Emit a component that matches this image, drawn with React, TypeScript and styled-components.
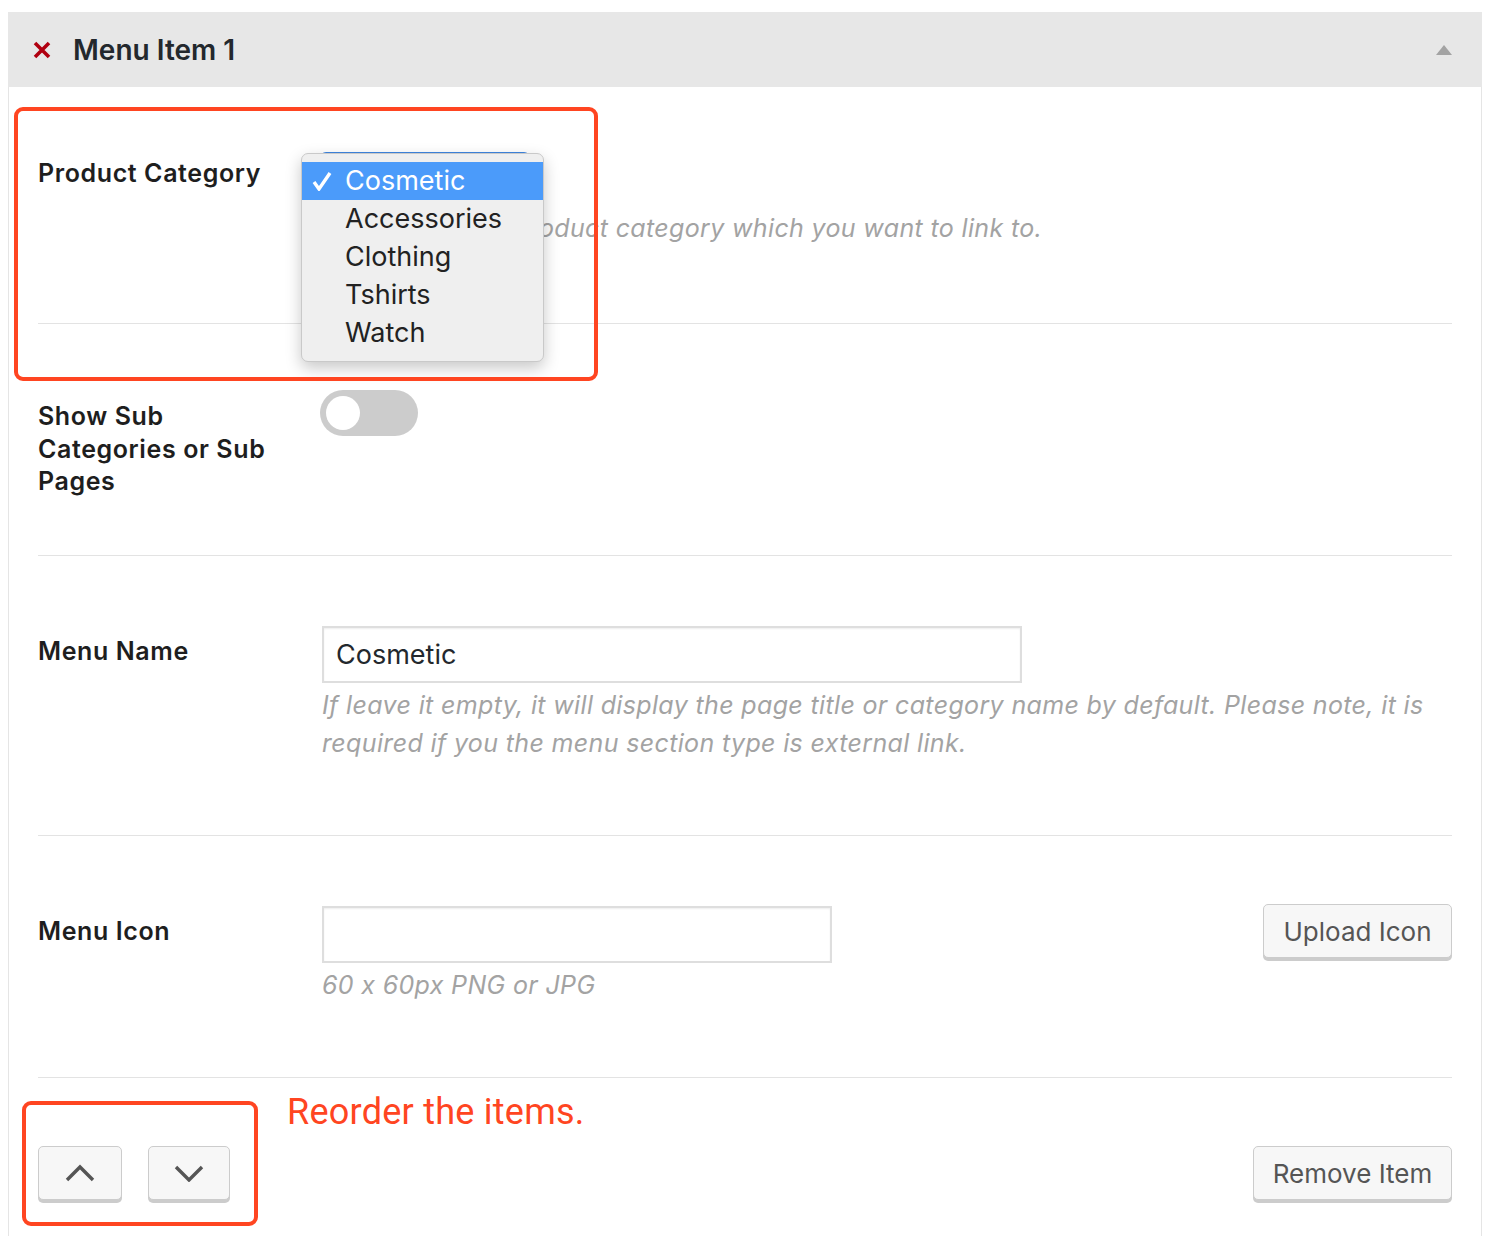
import React from "react";
import styled, { createGlobalStyle } from "styled-components";

const Global = createGlobalStyle`
  html, body { margin: 0; padding: 0; background: #fff; }
  body { font-family: Inter, "Noto Sans", sans-serif; color: #23282d; font-feature-settings: "calt" 0; }
  * { box-sizing: border-box; }
`;

const Page = styled.div`
  padding: 12px 10px 0 8px;
`;

const Panel = styled.section`
  position: relative;
  width: 1474px;
`;

const Header = styled.header`
  height: 75px;
  background: #e7e7e7;
  display: flex;
  align-items: center;
  padding: 0 30px 0 24px;
  gap: 21px;
`;

const Title = styled.h2`
  margin: 0;
  flex: 1;
  font-size: 28px;
  font-weight: 600;
  color: #23282d;
  line-height: 34px;
`;

const Body = styled.div`
  border-left: 1px solid #e5e5e5;
  border-right: 1px solid #e5e5e5;
  padding: 0 29px;
  min-height: 1149px;
`;

const Row = styled.div<{ $pt: number; $h: number }>`
  display: grid;
  grid-template-columns: 284px 1fr;
  align-items: start;
  padding-top: ${(p) => p.$pt}px;
  height: ${(p) => p.$h}px;
  border-bottom: 1px solid #e3e3e3;
`;

const ActionRow = styled.div`
  padding-top: 68px;
  height: 160px;
`;

const Label = styled.div<{ $mt: number }>`
  margin-top: ${(p) => p.$mt}px;
  max-width: 245px;
  font-size: 25px;
  font-weight: 600;
  letter-spacing: 0.6px;
  line-height: 32.5px;
  color: #1e1e1e;
`;

const Field = styled.div`
  display: flex;
  flex-direction: column;
  align-items: flex-start;
`;

const FieldLine = styled.div`
  display: flex;
  justify-content: space-between;
  align-items: flex-start;
`;

const Help = styled.p`
  margin: 3px 0 0;
  font-size: 25px;
  letter-spacing: 0.35px;
  line-height: 38px;
  font-style: italic;
  color: #a3a3a3;
  max-width: 1125px;
`;

const SelectWrap = styled.div`
  position: relative;
  width: 210px;
  height: 54px;
  margin-left: -2px;
  border-radius: 6px;
  background: linear-gradient(#3f86e0, #2f6fc9);
`;

const Popup = styled.ul`
  position: absolute;
  z-index: 2;
  left: -19px;
  top: 1px;
  width: 243px;
  margin: 0;
  padding: 8px 0 9px;
  list-style: none;
  background: #efefef;
  border: 1px solid #c9c9c9;
  border-radius: 7px;
  box-shadow: 0 6px 16px rgba(0, 0, 0, 0.22);
`;

const Option = styled.li<{ $active?: boolean }>`
  position: relative;
  height: 38px;
  padding-left: 43px;
  font-size: 27px;
  line-height: 38px;
  color: ${(p) => (p.$active ? "#fff" : "#222")};
  background: ${(p) => (p.$active ? "#4b9bfa" : "transparent")};
`;

const Check = styled.svg`
  position: absolute;
  left: 10px;
  top: 9px;
`;

const Toggle = styled.div`
  width: 98px;
  height: 46px;
  margin-left: -2px;
  border-radius: 23px;
  background: #cccccc;
  padding: 6px;
`;

const Knob = styled.div`
  width: 34px;
  height: 34px;
  border-radius: 50%;
  background: #fff;
`;

const TextInput = styled.div<{ $w: number }>`
  width: ${(p) => p.$w}px;
  height: 57px;
  border: 2px solid #dedede;
  box-shadow: inset 0 1px 2px rgba(0, 0, 0, 0.07);
  background: #fff;
  padding: 0 12px;
  font-size: 27px;
  line-height: 53px;
  color: #23282d;
`;

const Button = styled.button<{ $w: number; $mt?: number }>`
  width: ${(p) => p.$w}px;
  height: 54px;
  margin: ${(p) => p.$mt ?? 0}px 0 3px;
  border: 1px solid #cccccc;
  border-radius: 5px;
  background: #f7f7f7;
  box-shadow: 0 3px 0 #cccccc;
  font-family: Inter, "Noto Sans", sans-serif;
  font-size: 26px;
  color: #555;
  display: flex;
  align-items: center;
  justify-content: center;
  padding: 0;
`;

const Actions = styled.div`
  display: flex;
  justify-content: space-between;
  align-items: flex-start;
`;

const ArrowGroup = styled.div`
  display: flex;
  gap: 26px;
`;

const Annotation = styled.div<{ $l: number; $t: number; $w: number; $h: number }>`
  position: absolute;
  z-index: 3;
  left: ${(p) => p.$l}px;
  top: ${(p) => p.$t}px;
  width: ${(p) => p.$w}px;
  height: ${(p) => p.$h}px;
  border: 4px solid #ff4521;
  border-radius: 9px;
  pointer-events: none;
`;

const Note = styled.div`
  position: absolute;
  z-index: 3;
  left: 279px;
  top: 1078px;
  font-family: Roboto, "Liberation Sans", sans-serif;
  font-size: 36px;
  letter-spacing: 0.25px;
  line-height: 44px;
  color: #ff4521;
`;

const options = ["Cosmetic", "Accessories", "Clothing", "Tshirts", "Watch"];

export default function App() {
  return (
    <Page>
      <Global />
      <Panel>
        <Header>
          <svg width="20" height="20" viewBox="0 0 20 20">
            <path d="M3 3 L17 17 M17 3 L3 17" stroke="#b00010" strokeWidth="3.6" />
          </svg>
          <Title>Menu Item 1</Title>
          <svg width="16" height="10" viewBox="0 0 16 10">
            <polygon points="8,0 16,10 0,10" fill="#a3a3a3" />
          </svg>
        </Header>
        <Body>
          <Row $pt={65} $h={237}>
            <Label $mt={5}>Product Category</Label>
            <Field>
              <SelectWrap>
                <Popup>
                  {options.map((o, i) => (
                    <Option key={o} $active={i === 0}>
                      {i === 0 && (
                        <Check width="20" height="20" viewBox="0 0 20 20">
                          <polyline points="2,11 7,18 18,2" fill="none" stroke="#fff" strokeWidth="3.4" />
                        </Check>
                      )}
                      {o}
                    </Option>
                  ))}
                </Popup>
              </SelectWrap>
              <Help>Please select a product category which you want to link to.</Help>
            </Field>
          </Row>
          <Row $pt={66} $h={232}>
            <Label $mt={10}>Show Sub Categories or Sub Pages</Label>
            <Field>
              <Toggle>
                <Knob />
              </Toggle>
            </Field>
          </Row>
          <Row $pt={70} $h={280}>
            <Label $mt={9}>Menu Name</Label>
            <Field>
              <TextInput $w={700}>Cosmetic</TextInput>
              <Help>
                If leave it empty, it will display the page title or category name by default. Please note, it is
                required if you the menu section type is external link.
              </Help>
            </Field>
          </Row>
          <Row $pt={70} $h={242}>
            <Label $mt={9}>Menu Icon</Label>
            <FieldLine>
              <Field>
                <TextInput $w={510} />
                <Help>60 x 60px PNG or JPG</Help>
              </Field>
              <Button $w={189} $mt={-2}>Upload Icon</Button>
            </FieldLine>
          </Row>
          <ActionRow>
            <Actions>
              <ArrowGroup>
                <Button $w={84} aria-label="Move up">
                  <svg width="30" height="18" viewBox="0 0 30 18">
                    <polyline points="2,16 15,3 28,16" fill="none" stroke="#555" strokeWidth="3.4" />
                  </svg>
                </Button>
                <Button $w={82} aria-label="Move down">
                  <svg width="30" height="18" viewBox="0 0 30 18">
                    <polyline points="2,3 15,16 28,3" fill="none" stroke="#555" strokeWidth="3.4" />
                  </svg>
                </Button>
              </ArrowGroup>
              <Button $w={199}>Remove Item</Button>
            </Actions>
          </ActionRow>
        </Body>
        <Annotation $l={6} $t={95} $w={584} $h={274} />
        <Annotation $l={14} $t={1089} $w={236} $h={125} />
        <Note>Reorder the items.</Note>
      </Panel>
    </Page>
  );
}
